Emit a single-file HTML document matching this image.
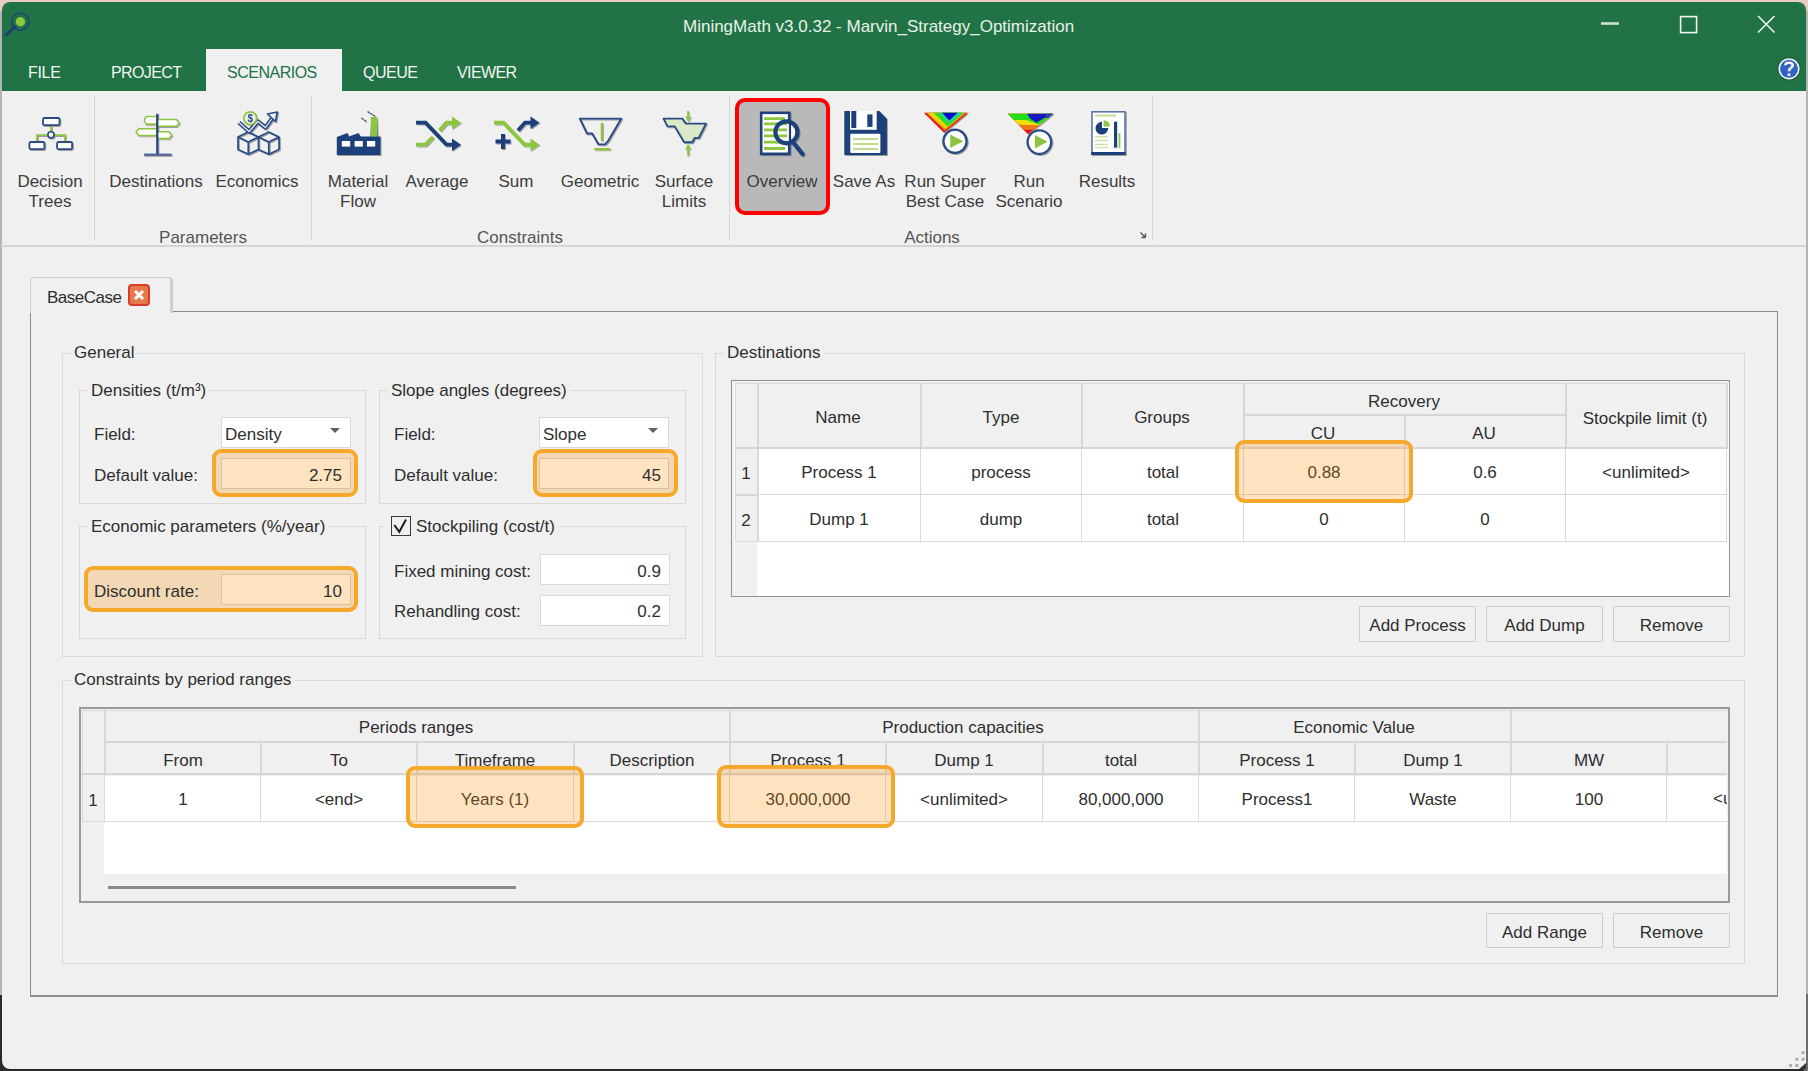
<!DOCTYPE html>
<html><head><meta charset="utf-8">
<style>
*{margin:0;padding:0;box-sizing:border-box}
html,body{width:1808px;height:1071px;overflow:hidden;background:#2d2d2d}
body{position:relative;font-family:"Liberation Sans",sans-serif;font-size:17px;color:#333}
.a{position:absolute}
.t{position:absolute;white-space:nowrap;line-height:20px;font-size:17px;color:#2e2e2e}
.lbl{position:absolute;white-space:nowrap;line-height:20px;font-size:17px;color:#2e2e2e;background:#f0f0f0;padding:0 3px}
.hl{position:absolute;border:4px solid #f5a82b;border-radius:9px;background:rgba(251,143,3,0.25)}
.btn{position:absolute;border:1px solid #cdcdcd;background:#f0f0f0;text-align:center;line-height:37px;font-size:17px;color:#2e2e2e}
.hc{position:absolute;background:#f0f0f0;border-right:2px solid #d6d6d6;border-bottom:2px solid #d6d6d6;text-align:center;color:#2e2e2e;font-size:17px;white-space:nowrap;overflow:hidden}
.dc{position:absolute;background:#fff;border-right:1px solid #d9d9d9;border-bottom:1px solid #d9d9d9;text-align:center;color:#2e2e2e;font-size:17px;white-space:nowrap;overflow:hidden}
svg{overflow:visible}
</style></head>
<body>

<div class="a" style="left:0px;top:0px;width:1808px;height:1071px;background:#b4b4b4"></div>
<div class="a" style="left:0px;top:995px;width:1808px;height:76px;background:#2a2a2a"></div>
<div class="a" style="left:1804px;top:994px;width:4px;height:77px;background:#6c6c6c"></div>
<div class="a" style="left:0px;top:0px;width:1808px;height:11px;background:#e8cdbf"></div>
<div class="a" style="left:2px;top:2px;width:1804px;height:1067px;background:#f0f0f0;border-radius:8px 8px 3px 8px"></div>
<div class="a" style="left:2px;top:2px;width:1804px;height:89px;background:#217346;border-radius:8px 8px 0 0"></div>
<svg class="a" style="left:0;top:0" width="40" height="45">
<circle cx="20.3" cy="21.6" r="8.6" fill="none" stroke="#1f3d7a" stroke-width="1.7" opacity="0.85"/>
<circle cx="20.4" cy="21.8" r="4.7" fill="#8dc63f"/>
<path d="M15 27L6 35" stroke="#1f3d7a" stroke-width="3" stroke-linecap="round"/>
</svg>
<svg class="a" style="left:1590px;top:5px" width="200" height="40">
<rect x="11" y="17.2" width="18" height="2.6" fill="#cfe0d2"/>
<rect x="90.6" y="11.6" width="16" height="16" fill="none" stroke="#eef4ee" stroke-width="1.6"/>
<path d="M168 11L184.5 27.5M184.5 11L168 27.5" stroke="#eef4ee" stroke-width="1.6"/>
</svg>
<svg class="a" style="left:1770px;top:50px" width="36" height="36">
<circle cx="19" cy="18.8" r="11.8" fill="#16502c" opacity="0.6"/>
<circle cx="19" cy="18.8" r="10.6" fill="#f0f4f8"/>
<circle cx="19" cy="18.8" r="9" fill="#2f62c4"/>
<path d="M15.3 15.2C15.3 12.2 22.8 11.8 22.8 15.2C22.8 17.6 19.2 17.6 19 21.2" fill="none" stroke="#f4f1ea" stroke-width="2.6"/>
<rect x="17.6" y="23.4" width="2.8" height="2.6" fill="#f4f1ea"/>
</svg>

<div class="t" style="left:683px;top:17px;color:#e9f1ea">MiningMath v3.0.32 - Marvin_Strategy_Optimization</div>
<div class="a" style="left:206px;top:49px;width:136px;height:42px;background:#f0f0f0"></div>
<div class="t" style="left:28px;top:63px;color:#f2f6f2;font-size:16px;letter-spacing:-0.3px">FILE</div>
<div class="t" style="left:111px;top:63px;color:#f2f6f2;font-size:16px;letter-spacing:-0.6px">PROJECT</div>
<div class="t" style="left:227px;top:63px;color:#217346;font-size:16px;letter-spacing:-0.5px">SCENARIOS</div>
<div class="t" style="left:363px;top:63px;color:#f2f6f2;font-size:16px;letter-spacing:-0.5px">QUEUE</div>
<div class="t" style="left:457px;top:63px;color:#f2f6f2;font-size:16px;letter-spacing:-0.6px">VIEWER</div>
<div class="a" style="left:1px;top:245px;width:1805px;height:2px;background:#d5d5d5"></div>
<div class="a" style="left:94px;top:95px;width:1px;height:146px;background:#d6d6d6"></div>
<div class="a" style="left:311px;top:95px;width:1px;height:146px;background:#d6d6d6"></div>
<div class="a" style="left:729px;top:95px;width:1px;height:146px;background:#d6d6d6"></div>
<div class="a" style="left:1152px;top:95px;width:1px;height:146px;background:#d6d6d6"></div>
<div class="a" style="left:735px;top:98px;width:95px;height:117px;border:4px solid #f00;border-radius:10px;background:#b9b9b9"></div>
<div class="t" style="left:-150px;width:400px;text-align:center;top:172px;color:#3c3c3c">Decision</div>
<div class="t" style="left:-150px;width:400px;text-align:center;top:192px;color:#3c3c3c">Trees</div>
<div class="t" style="left:-44px;width:400px;text-align:center;top:172px;color:#3c3c3c">Destinations</div>
<div class="t" style="left:57px;width:400px;text-align:center;top:172px;color:#3c3c3c">Economics</div>
<div class="t" style="left:158px;width:400px;text-align:center;top:172px;color:#3c3c3c">Material</div>
<div class="t" style="left:158px;width:400px;text-align:center;top:192px;color:#3c3c3c">Flow</div>
<div class="t" style="left:237px;width:400px;text-align:center;top:172px;color:#3c3c3c">Average</div>
<div class="t" style="left:316px;width:400px;text-align:center;top:172px;color:#3c3c3c">Sum</div>
<div class="t" style="left:400px;width:400px;text-align:center;top:172px;color:#3c3c3c">Geometric</div>
<div class="t" style="left:484px;width:400px;text-align:center;top:172px;color:#3c3c3c">Surface</div>
<div class="t" style="left:484px;width:400px;text-align:center;top:192px;color:#3c3c3c">Limits</div>
<div class="t" style="left:582px;width:400px;text-align:center;top:172px;color:#3c3c3c">Overview</div>
<div class="t" style="left:664px;width:400px;text-align:center;top:172px;color:#3c3c3c">Save As</div>
<div class="t" style="left:745px;width:400px;text-align:center;top:172px;color:#3c3c3c">Run Super</div>
<div class="t" style="left:745px;width:400px;text-align:center;top:192px;color:#3c3c3c">Best Case</div>
<div class="t" style="left:829px;width:400px;text-align:center;top:172px;color:#3c3c3c">Run</div>
<div class="t" style="left:829px;width:400px;text-align:center;top:192px;color:#3c3c3c">Scenario</div>
<div class="t" style="left:907px;width:400px;text-align:center;top:172px;color:#3c3c3c">Results</div>
<div class="t" style="left:3px;width:400px;text-align:center;top:228px;color:#555">Parameters</div>
<div class="t" style="left:320px;width:400px;text-align:center;top:228px;color:#555">Constraints</div>
<div class="t" style="left:732px;width:400px;text-align:center;top:228px;color:#555">Actions</div>
<svg class="a" style="left:0;top:100px" width="1200" height="65" viewBox="0 100 1200 65">
<defs>
<filter id="sh" x="-20%" y="-20%" width="150%" height="150%"><feDropShadow dx="1" dy="1" stdDeviation="0.6" flood-color="#000" flood-opacity="0.35"/></filter>
</defs>
<g filter="url(#sh)">
<!-- Decision Trees -->
<path d="M51 125.5V131M37 141V135.2H65V141" fill="none" stroke="#8cc63f" stroke-width="1.8"/>
<rect x="43" y="118" width="16.5" height="7.2" rx="1.5" fill="#fff" stroke="#2c4b85" stroke-width="1.8"/>
<rect x="29.4" y="142" width="15" height="7.2" rx="1.5" fill="#fff" stroke="#2c4b85" stroke-width="1.8"/>
<rect x="57.1" y="142" width="15" height="7.2" rx="1.5" fill="#fff" stroke="#2c4b85" stroke-width="1.8"/>
<circle cx="51" cy="134.8" r="3.1" fill="#fff" stroke="#2c4b85" stroke-width="1.6"/>
<!-- Destinations -->
<path d="M146 116.6H157V124H146L144.2 120.3Z" fill="#fff" stroke="#8cc63f" stroke-width="1.5"/>
<path d="M157 119.6H176.5L179.2 122.9L176.5 126.2H157Z" fill="#fff" stroke="#8cc63f" stroke-width="1.5"/>
<path d="M138.8 128.8H157V135.6H138.8L136 132.2Z" fill="#fff" stroke="#8cc63f" stroke-width="1.5"/>
<path d="M157 131.8H169L171.6 135.2L169 138.6H157Z" fill="#fff" stroke="#8cc63f" stroke-width="1.5"/>
<rect x="156.2" y="113.8" width="2.2" height="41.5" fill="#243f80"/>
<rect x="144" y="153.6" width="27.6" height="2.2" fill="#4d6294"/>
<!-- Economics -->
<g fill="none" stroke="#2a4a86" stroke-width="1.7" stroke-linejoin="round">
<path d="M238 137L248.3 132L258.5 137L248.3 142Z M238 137V149.5L248.3 154.2L258.5 149.5V137 M248.3 142V154.2"/>
<path d="M258.5 137L268.8 132L279 137L268.8 142Z M258.5 149.5L268.8 154.2L279 149.5V137 M268.8 142V154.2"/>
<path d="M239 122.5L249 131.5L258 121.5L265.5 127.5L273.5 116.5" stroke-width="4.2"/>
<path d="M239 122.5L249 131.5L258 121.5L265.5 127.5L273.5 116.5" stroke="#f0f0f0" stroke-width="1.2"/>
<path d="M267.5 114L277.3 112L275.5 121.5Z" stroke-width="1.7" fill="#f0f0f0"/>
</g>
<circle cx="250.2" cy="118.2" r="6.4" fill="#f0f0f0" stroke="#8cc63f" stroke-width="1.7"/>
<text x="250.2" y="122.3" font-family="Liberation Sans" font-size="10" font-weight="bold" fill="#2a4a86" text-anchor="middle">$</text>
<!-- Material Flow -->
<path d="M336.8 155V137L347.5 133L349 136.6L358.5 133L360.5 136.6H370.5L371.2 117H377L377.6 136.6H380.5V155Z" fill="#1e3f7a"/>
<rect x="370.8" y="117" width="6.4" height="19.6" fill="#8cc63f"/>
<rect x="341.8" y="141" width="8.4" height="5.6" fill="#fff"/>
<rect x="354.6" y="141" width="8.2" height="5.6" fill="#fff"/>
<rect x="366.9" y="141" width="8.3" height="5.6" fill="#fff"/>
<path d="M367.5 111.5L374.8 116M361.5 118L366.5 121.6" stroke="#2a4a86" stroke-width="1.3" stroke-dasharray="2.2 1.2"/>
<!-- Average -->
<path d="M416 122.6H425.5L446.5 144.6H453" fill="none" stroke="#1e3f7a" stroke-width="3.8"/>
<path d="M452 138.5L461 144.8L452 151Z" fill="#1e3f7a"/>
<path d="M416 144.6H425.5L433 137M439.5 130.5L446.5 122.6H453" fill="none" stroke="#8cc63f" stroke-width="3.8"/>
<path d="M452 116.5L461 122.7L452 129Z" fill="#8cc63f"/>
<!-- Sum -->
<path d="M518 130.5L525 122.6H531" fill="none" stroke="#1e3f7a" stroke-width="3.8"/>
<path d="M530.5 116.5L539.5 122.7L530.5 129Z" fill="#1e3f7a"/>
<path d="M494 122.6H503.5L524.5 144.6H531" fill="none" stroke="#8cc63f" stroke-width="3.8"/>
<path d="M530.5 138.5L539.5 144.8L530.5 151Z" fill="#8cc63f"/>
<path d="M503 134V149M495.5 141.5H510.5" stroke="#1e3f7a" stroke-width="4"/>
<!-- Geometric -->
<path d="M601.8 123.5V140M595 149.1H609.4" stroke="#8cc63f" stroke-width="2.2" stroke-linecap="round"/>
<path d="M579.8 118.6H621.3L607.8 141.4L605 144.4H598.5L592.2 133.5H587Z" fill="none" stroke="#2c4b85" stroke-width="1.9" stroke-linejoin="round"/>
<!-- Surface Limits -->
<path d="M663.6 118.6H682.2L685.9 123.6H706L698.8 137.9H694.6L692.4 142.2H684.2L674.8 126.4H667.5Z" fill="#dbeac6" stroke="#2c4b85" stroke-width="1.9" stroke-linejoin="round"/>
<path d="M688.1 111V120M688.1 145.5V155.5" stroke="#8cc63f" stroke-width="2"/>
<path d="M686 116.5L688.1 120.5L690.2 116.5M686 149.5L688.1 145.5L690.2 149.5" fill="none" stroke="#8cc63f" stroke-width="1.5"/>
<!-- Overview -->
<rect x="761.2" y="112.8" width="28" height="41" fill="#fff" stroke="#1e3f7a" stroke-width="2.6"/>
<path d="M764 118.6H785M764 123.9H785M764 129.9H785M764 135.9H785M764 142.2H785M764 148.5H785" stroke="#8cc63f" stroke-width="2.8"/>
<circle cx="786.4" cy="132.3" r="10" fill="#fff"/>
<path d="M776 123.9H787M776 129.9H787M776 135.9H787M776 142.2H787" stroke="#8cc63f" stroke-width="2.8"/>
<path d="M790 121V144" stroke="#1e3f7a" stroke-width="2.2"/>
<circle cx="786.4" cy="132.3" r="11" fill="none" stroke="#1e3f7a" stroke-width="4.2"/>
<path d="M794.5 144L802.5 154" stroke="#1e3f7a" stroke-width="4.4" stroke-linecap="round"/>
<!-- Save As -->
<path d="M844.3 111H879.3L886.9 118.8V155H844.3Z" fill="#1e3f7a"/>
<rect x="850" y="111" width="26.7" height="18.8" fill="#fff"/>
<rect x="851.3" y="111" width="5" height="17" fill="#1e3f7a"/>
<rect x="867.3" y="114.4" width="5.2" height="12.5" fill="#1e3f7a"/>
<rect x="850.3" y="133.7" width="30.1" height="19.3" rx="1" fill="#fff"/>
<path d="M853 139H878M853 144H878M853 149H878" stroke="#bfdc8f" stroke-width="2"/>
<!-- Run Super Best Case -->
<path d="M923.8 112.8H968.2L944.1 132.7Z" fill="#e41e1a"/>
<path d="M926.2 112.8H966.2L944.8 130.6Z" fill="#f07a14"/>
<path d="M927.4 112.8H964.8L945.3 129.2Z" fill="#e6d60e"/>
<path d="M933.7 112.8H964L947.6 126.4Z" fill="#30dc1c"/>
<path d="M938.9 112.8H961.4L949.2 122.9Z" fill="#14dcb4"/>
<path d="M942 112.8H957.7L949.3 120.4Z" fill="#0c0cc4"/>
<circle cx="955" cy="141.3" r="11.6" fill="#fff" stroke="#2c4b85" stroke-width="2.3"/>
<path d="M950.2 134.5V148L963.4 141.3Z" fill="#8cc63f"/>
<!-- Run Scenario -->
<clipPath id="rsc"><path d="M1007.8 113.8H1053L1028.1 134.2Z"/></clipPath>
<g clip-path="url(#rsc)">
<rect x="1000" y="110" width="60" height="30" fill="#e41818"/>
<rect x="1000" y="110" width="60" height="19.8" fill="#ee7812"/>
<path d="M1000 110H1060V120L1040.7 125.2L1019.3 124.8H1000Z" fill="#ece00e"/>
<path d="M1000 110H1060V119L1047.5 120.1L1038.6 124.6L1026.6 119.9H1000Z" fill="#24dc18"/>
<path d="M1025 110H1060V113.8L1053 117.6L1044.5 117.8L1036.5 122.8L1030 118.5Z" fill="#1414c4"/>
<path d="M1046 110H1060V114L1053 118L1045.5 117.8Z" fill="#1a4cb8"/>
</g>
<circle cx="1039.4" cy="142.1" r="11.8" fill="#fff" stroke="#2c4b85" stroke-width="2.3"/>
<path d="M1035 135V148.5L1047.5 141.8Z" fill="#8cc63f"/>
<!-- Results -->
<rect x="1092" y="111.8" width="33" height="42.4" fill="#fff" stroke="#5a74a4" stroke-width="1.6"/>
<rect x="1091.2" y="152" width="34.3" height="2.9" fill="#1e3f7a"/>
<rect x="1095.2" y="114.4" width="20.8" height="2.4" fill="#c9e2a4"/>
<path d="M1102 121.8A6.4 6.4 0 1 0 1108.3 128H1102Z" fill="#1e3f7a"/>
<path d="M1103.6 126.6V120.2A6.4 6.4 0 0 1 1110 126.6Z" fill="#8cc63f"/>
<path d="M1095 136.7H1108M1095 140.5H1108M1095 144.5H1108M1095 147.6H1108" stroke="#c9e2a4" stroke-width="1.4"/>
<rect x="1114" y="121.7" width="3.2" height="26.2" fill="#1e3f7a"/>
<rect x="1118.6" y="133.2" width="1.8" height="14.6" fill="#8cc63f"/>
<path d="M1111 148H1123" stroke="#d0d8e0" stroke-width="0.8"/>
</g>
</svg>
<svg class="a" style="left:1139px;top:231px" width="8" height="8"><path d="M6.5 6.5H2.5M6.5 6.5V2.5M6.5 6.5L1.5 1.5" stroke="#555" stroke-width="1.4" fill="none"/></svg>

<div class="a" style="left:30px;top:311px;width:1748px;height:686px;border:1px solid #8c8c8c;border-bottom:2px solid #8c8c8c;border-right:1px solid #8c8c8c"></div>
<div class="a" style="left:30px;top:277px;width:141px;height:36px;background:#f0f0f0;border:1px solid #d2d2d2;border-bottom:none;border-radius:4px 4px 0 0;box-shadow:2px 0 0 #cfcfcf"></div>
<div class="t" style="left:47px;top:288px;letter-spacing:-0.5px">BaseCase</div>
<div class="a" style="left:128px;top:284px;width:22px;height:22px;border:2px solid #dc3b2a;border-radius:4px;background:#e57a4c"></div>
<svg class="a" style="left:128px;top:284px" width="22" height="22"><path d="M7 7L15 15M15 7L7 15" stroke="#fff" stroke-width="3"/></svg>
<div class="a" style="left:62px;top:353px;width:641px;height:304px;border:1px solid #d9d9d9"></div>
<div class="lbl" style="left:71px;top:343px">General</div>
<div class="a" style="left:79px;top:390px;width:287px;height:114px;border:1px solid #d9d9d9"></div>
<div class="lbl" style="left:88px;top:381px">Densities (t/m³)</div>
<div class="a" style="left:379px;top:390px;width:307px;height:114px;border:1px solid #d9d9d9"></div>
<div class="lbl" style="left:388px;top:381px">Slope angles (degrees)</div>
<div class="a" style="left:79px;top:526px;width:287px;height:113px;border:1px solid #d9d9d9"></div>
<div class="lbl" style="left:88px;top:517px">Economic parameters (%/year)</div>
<div class="a" style="left:379px;top:526px;width:307px;height:113px;border:1px solid #d9d9d9"></div>
<div class="lbl" style="left:385px;top:516px;width:174px;height:20px"></div>
<div class="a" style="left:391px;top:516px;width:20px;height:20px;border:1.5px solid #3a3a3a"></div>
<svg class="a" style="left:380px;top:505px" width="40" height="40"><path d="M14.3 20L19.3 26.8L26 14.6" stroke="#1e1e1e" stroke-width="2" fill="none" stroke-linejoin="miter"/></svg>
<div class="t" style="left:416px;top:517px;">Stockpiling (cost/t)</div>
<div class="t" style="left:94px;top:425px;">Field:</div>
<div class="t" style="left:94px;top:466px;">Default value:</div>
<div class="a" style="left:221px;top:417px;width:130px;height:31px;background:#fff;border:1px solid #dadada"></div>
<div class="t" style="left:225px;top:425px;">Density</div>
<svg class="a" style="left:329px;top:427px" width="12" height="8"><path d="M1 1H11L6 6Z" fill="#606060"/></svg>
<div class="a" style="left:221px;top:458px;width:130px;height:31px;background:#fff;border:1px solid #d0d0d0"></div>
<div class="hl" style="left:212px;top:449px;width:146px;height:48px"></div>
<div class="t" style="left:-58px;width:400px;text-align:right;top:466px;">2.75</div>
<div class="t" style="left:394px;top:425px;">Field:</div>
<div class="t" style="left:394px;top:466px;">Default value:</div>
<div class="a" style="left:539px;top:417px;width:130px;height:31px;background:#fff;border:1px solid #dadada"></div>
<div class="t" style="left:543px;top:425px;">Slope</div>
<svg class="a" style="left:647px;top:427px" width="12" height="8"><path d="M1 1H11L6 6Z" fill="#606060"/></svg>
<div class="a" style="left:539px;top:458px;width:130px;height:31px;background:#fff;border:1px solid #d0d0d0"></div>
<div class="hl" style="left:533px;top:449px;width:145px;height:48px"></div>
<div class="t" style="left:261px;width:400px;text-align:right;top:466px;">45</div>
<div class="a" style="left:221px;top:574px;width:130px;height:31px;background:#fff;border:1px solid #d0d0d0"></div>
<div class="hl" style="left:84px;top:566px;width:274px;height:46px"></div>
<div class="t" style="left:94px;top:582px;">Discount rate:</div>
<div class="t" style="left:-58px;width:400px;text-align:right;top:582px;">10</div>
<div class="t" style="left:394px;top:562px;">Fixed mining cost:</div>
<div class="a" style="left:540px;top:554px;width:130px;height:31px;background:#fff;border:1px solid #dadada"></div>
<div class="t" style="left:261px;width:400px;text-align:right;top:562px;">0.9</div>
<div class="t" style="left:394px;top:602px;">Rehandling cost:</div>
<div class="a" style="left:540px;top:595px;width:130px;height:31px;background:#fff;border:1px solid #dadada"></div>
<div class="t" style="left:261px;width:400px;text-align:right;top:602px;">0.2</div>
<div class="a" style="left:715px;top:353px;width:1030px;height:304px;border:1px solid #d9d9d9"></div>
<div class="lbl" style="left:724px;top:343px">Destinations</div>
<div class="a" style="left:731px;top:380px;width:999px;height:217px;border:1px solid #939393;background:#fff"></div>
<div class="a" style="left:732px;top:381px;width:997px;height:215px;border:2px solid #efefef;border-right:none;border-bottom:none"></div>
<div class="a" style="left:735px;top:383px;width:22px;height:213px;background:#f0f0f0"></div>
<div class="a" style="left:735px;top:383px;width:992px;height:66px;background:#f0f0f0"></div>
<div class="a" style="left:735px;top:383px;width:992px;height:1px;background:#d9d9d9"></div>
<div class="a" style="left:735px;top:383px;width:1px;height:158px;background:#d9d9d9"></div>
<div class="a" style="left:757px;top:383px;width:2px;height:66px;background:#d6d6d6"></div>
<div class="a" style="left:920px;top:383px;width:2px;height:66px;background:#d6d6d6"></div>
<div class="a" style="left:1081px;top:383px;width:2px;height:66px;background:#d6d6d6"></div>
<div class="a" style="left:1243px;top:383px;width:2px;height:66px;background:#d6d6d6"></div>
<div class="a" style="left:1404px;top:415px;width:2px;height:34px;background:#d6d6d6"></div>
<div class="a" style="left:1565px;top:383px;width:2px;height:66px;background:#d6d6d6"></div>
<div class="a" style="left:1726px;top:383px;width:2px;height:66px;background:#d6d6d6"></div>
<div class="a" style="left:1243px;top:414px;width:322px;height:2px;background:#d6d6d6"></div>
<div class="a" style="left:735px;top:447px;width:992px;height:2px;background:#d6d6d6"></div>
<div class="a" style="left:735px;top:494px;width:992px;height:1px;background:#d9d9d9"></div>
<div class="a" style="left:735px;top:541px;width:992px;height:1px;background:#d9d9d9"></div>
<div class="a" style="left:757px;top:449px;width:2px;height:92px;background:#d9d9d9"></div>
<div class="a" style="left:920px;top:449px;width:1px;height:92px;background:#d9d9d9"></div>
<div class="a" style="left:1081px;top:449px;width:1px;height:92px;background:#d9d9d9"></div>
<div class="a" style="left:1243px;top:449px;width:1px;height:92px;background:#d9d9d9"></div>
<div class="a" style="left:1404px;top:449px;width:1px;height:92px;background:#d9d9d9"></div>
<div class="a" style="left:1565px;top:449px;width:1px;height:92px;background:#d9d9d9"></div>
<div class="a" style="left:1726px;top:449px;width:1px;height:92px;background:#d9d9d9"></div>
<div class="a" style="left:735px;top:494px;width:22px;height:2px;background:#d6d6d6"></div>
<div class="t" style="left:638px;width:400px;text-align:center;top:408px;">Name</div>
<div class="t" style="left:801px;width:400px;text-align:center;top:408px;">Type</div>
<div class="t" style="left:962px;width:400px;text-align:center;top:408px;">Groups</div>
<div class="t" style="left:1204px;width:400px;text-align:center;top:392px;">Recovery</div>
<div class="t" style="left:1123px;width:400px;text-align:center;top:424px;">CU</div>
<div class="t" style="left:1284px;width:400px;text-align:center;top:424px;">AU</div>
<div class="t" style="left:1445px;width:400px;text-align:center;top:409px;">Stockpile limit (t)</div>
<div class="t" style="left:639px;width:400px;text-align:center;top:463px;">Process 1</div>
<div class="t" style="left:801px;width:400px;text-align:center;top:463px;">process</div>
<div class="t" style="left:963px;width:400px;text-align:center;top:463px;">total</div>
<div class="t" style="left:1124px;width:400px;text-align:center;top:463px;">0.88</div>
<div class="t" style="left:1285px;width:400px;text-align:center;top:463px;">0.6</div>
<div class="t" style="left:1446px;width:400px;text-align:center;top:463px;">&lt;unlimited&gt;</div>
<div class="t" style="left:639px;width:400px;text-align:center;top:510px;">Dump 1</div>
<div class="t" style="left:801px;width:400px;text-align:center;top:510px;">dump</div>
<div class="t" style="left:963px;width:400px;text-align:center;top:510px;">total</div>
<div class="t" style="left:1124px;width:400px;text-align:center;top:510px;">0</div>
<div class="t" style="left:1285px;width:400px;text-align:center;top:510px;">0</div>
<div class="t" style="left:1446px;width:400px;text-align:center;top:510px;"></div>
<div class="t" style="left:546px;width:400px;text-align:center;top:464px;">1</div>
<div class="t" style="left:546px;width:400px;text-align:center;top:511px;">2</div>
<div class="hl" style="left:1235px;top:440px;width:178px;height:63px"></div>
<div class="btn" style="left:1359px;top:606px;width:117px;height:36px">Add Process</div>
<div class="btn" style="left:1486px;top:606px;width:117px;height:36px">Add Dump</div>
<div class="btn" style="left:1613px;top:606px;width:117px;height:36px">Remove</div>
<div class="a" style="left:62px;top:680px;width:1683px;height:284px;border:1px solid #d9d9d9"></div>
<div class="lbl" style="left:71px;top:670px">Constraints by period ranges</div>
<div class="a" style="left:79px;top:707px;width:1651px;height:196px;border:2px solid #9a9a9a;background:#f0f0f0"></div>
<div class="a" style="left:104px;top:776px;width:1623px;height:98px;background:#fff"></div>
<div class="a" style="left:82px;top:710px;width:22px;height:164px;background:#f0f0f0"></div>
<div class="a" style="left:82px;top:710px;width:1645px;height:65px;background:#f0f0f0"></div>
<div class="a" style="left:82px;top:710px;width:1645px;height:1px;background:#d9d9d9"></div>
<div class="a" style="left:82px;top:710px;width:1px;height:112px;background:#d9d9d9"></div>
<div class="a" style="left:104px;top:710px;width:2px;height:65px;background:#d6d6d6"></div>
<div class="a" style="left:729px;top:710px;width:2px;height:65px;background:#d6d6d6"></div>
<div class="a" style="left:1198px;top:710px;width:2px;height:65px;background:#d6d6d6"></div>
<div class="a" style="left:1510px;top:710px;width:2px;height:65px;background:#d6d6d6"></div>
<div class="a" style="left:104px;top:741px;width:1623px;height:2px;background:#d6d6d6"></div>
<div class="a" style="left:104px;top:742px;width:2px;height:33px;background:#d6d6d6"></div>
<div class="a" style="left:260px;top:742px;width:2px;height:33px;background:#d6d6d6"></div>
<div class="a" style="left:416px;top:742px;width:2px;height:33px;background:#d6d6d6"></div>
<div class="a" style="left:573px;top:742px;width:2px;height:33px;background:#d6d6d6"></div>
<div class="a" style="left:729px;top:742px;width:2px;height:33px;background:#d6d6d6"></div>
<div class="a" style="left:885px;top:742px;width:2px;height:33px;background:#d6d6d6"></div>
<div class="a" style="left:1042px;top:742px;width:2px;height:33px;background:#d6d6d6"></div>
<div class="a" style="left:1198px;top:742px;width:2px;height:33px;background:#d6d6d6"></div>
<div class="a" style="left:1354px;top:742px;width:2px;height:33px;background:#d6d6d6"></div>
<div class="a" style="left:1510px;top:742px;width:2px;height:33px;background:#d6d6d6"></div>
<div class="a" style="left:1666px;top:742px;width:2px;height:33px;background:#d6d6d6"></div>
<div class="a" style="left:82px;top:773px;width:1645px;height:2px;background:#d6d6d6"></div>
<div class="a" style="left:82px;top:821px;width:1645px;height:1px;background:#d9d9d9"></div>
<div class="a" style="left:260px;top:775px;width:1px;height:47px;background:#d9d9d9"></div>
<div class="a" style="left:416px;top:775px;width:1px;height:47px;background:#d9d9d9"></div>
<div class="a" style="left:573px;top:775px;width:1px;height:47px;background:#d9d9d9"></div>
<div class="a" style="left:729px;top:775px;width:1px;height:47px;background:#d9d9d9"></div>
<div class="a" style="left:885px;top:775px;width:1px;height:47px;background:#d9d9d9"></div>
<div class="a" style="left:1042px;top:775px;width:1px;height:47px;background:#d9d9d9"></div>
<div class="a" style="left:1198px;top:775px;width:1px;height:47px;background:#d9d9d9"></div>
<div class="a" style="left:1354px;top:775px;width:1px;height:47px;background:#d9d9d9"></div>
<div class="a" style="left:1510px;top:775px;width:1px;height:47px;background:#d9d9d9"></div>
<div class="a" style="left:1666px;top:775px;width:1px;height:47px;background:#d9d9d9"></div>
<div class="a" style="left:104px;top:775px;width:1px;height:47px;background:#d9d9d9"></div>
<div class="a" style="left:108px;top:886px;width:408px;height:3px;background:#8a8a8a"></div>
<div class="t" style="left:216px;width:400px;text-align:center;top:718px;">Periods ranges</div>
<div class="t" style="left:763px;width:400px;text-align:center;top:718px;">Production capacities</div>
<div class="t" style="left:1154px;width:400px;text-align:center;top:718px;">Economic Value</div>
<div class="t" style="left:-17px;width:400px;text-align:center;top:751px;">From</div>
<div class="t" style="left:139px;width:400px;text-align:center;top:751px;">To</div>
<div class="t" style="left:295px;width:400px;text-align:center;top:751px;">Timeframe</div>
<div class="t" style="left:452px;width:400px;text-align:center;top:751px;">Description</div>
<div class="t" style="left:608px;width:400px;text-align:center;top:751px;">Process 1</div>
<div class="t" style="left:764px;width:400px;text-align:center;top:751px;">Dump 1</div>
<div class="t" style="left:921px;width:400px;text-align:center;top:751px;">total</div>
<div class="t" style="left:1077px;width:400px;text-align:center;top:751px;">Process 1</div>
<div class="t" style="left:1233px;width:400px;text-align:center;top:751px;">Dump 1</div>
<div class="t" style="left:1389px;width:400px;text-align:center;top:751px;">MW</div>
<div class="t" style="left:-17px;width:400px;text-align:center;top:790px;">1</div>
<div class="t" style="left:139px;width:400px;text-align:center;top:790px;">&lt;end&gt;</div>
<div class="t" style="left:295px;width:400px;text-align:center;top:790px;">Years (1)</div>
<div class="t" style="left:452px;width:400px;text-align:center;top:790px;"></div>
<div class="t" style="left:608px;width:400px;text-align:center;top:790px;">30,000,000</div>
<div class="t" style="left:764px;width:400px;text-align:center;top:790px;">&lt;unlimited&gt;</div>
<div class="t" style="left:921px;width:400px;text-align:center;top:790px;">80,000,000</div>
<div class="t" style="left:1077px;width:400px;text-align:center;top:790px;">Process1</div>
<div class="t" style="left:1233px;width:400px;text-align:center;top:790px;">Waste</div>
<div class="t" style="left:1389px;width:400px;text-align:center;top:790px;">100</div>
<div class="a" style="left:1668px;top:776px;width:59px;height:45px;overflow:hidden"><div class="t" style="left:45px;top:13px">&lt;unlimited&gt;</div></div>
<div class="t" style="left:-107px;width:400px;text-align:center;top:791px;">1</div>
<div class="hl" style="left:406px;top:766px;width:178px;height:62px"></div>
<div class="hl" style="left:717px;top:765px;width:178px;height:63px"></div>
<div class="btn" style="left:1486px;top:913px;width:117px;height:35px">Add Range</div>
<div class="btn" style="left:1613px;top:913px;width:117px;height:35px">Remove</div>
<svg class="a" style="left:1780px;top:1045px" width="28" height="26"><g fill="#ababab"><rect x="21.5" y="6.2" width="3" height="3"/><rect x="15.3" y="12.8" width="3" height="3"/><rect x="21.5" y="12.8" width="3" height="3"/><rect x="9.1" y="19" width="3" height="3"/><rect x="15.3" y="19" width="3" height="3"/></g><path d="M26 18V24H19Z" fill="#333"/></svg>
</body></html>
